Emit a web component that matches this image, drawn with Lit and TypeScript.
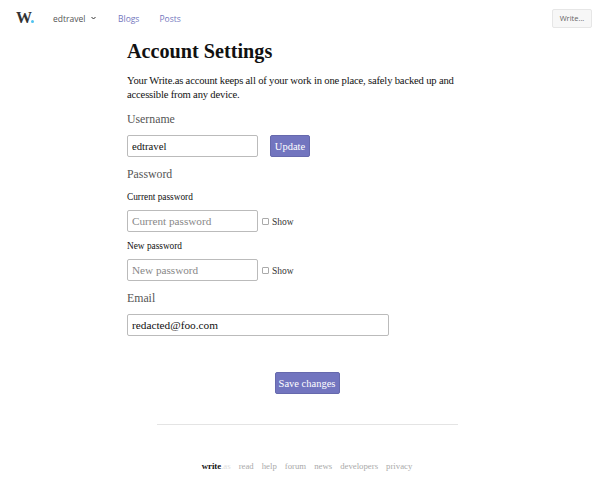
import { LitElement, html, css } from 'lit'
import { customElement } from 'lit/decorators.js'

const links = ['read', 'help', 'forum', 'news', 'developers', 'privacy']

@customElement('app-root')
export class AppRoot extends LitElement {
  static styles = css`
    :host {
      display: block;
      width: 614px;
      height: 500px;
      overflow: hidden;
      background: #fff;
      color: #111;
      font-family: 'Liberation Serif', serif;
    }
    * {
      box-sizing: border-box;
    }
    nav {
      display: flex;
      align-items: center;
      height: 36px;
      padding: 0 22px 0 16px;
      font-family: 'Open Sans', sans-serif;
      font-size: 8.5px;
    }
    .logo {
      display: flex;
      align-items: baseline;
      width: 37px;
      font-family: 'Liberation Serif', serif;
      font-weight: 700;
      font-size: 16px;
      line-height: 1;
      color: #333;
    }
    .logo i {
      width: 3px;
      height: 3px;
      margin-left: -1px;
      border-radius: 50%;
      background: #4fc3f0;
    }
    .user {
      display: flex;
      align-items: center;
      width: 65px;
      color: #555;
    }
    .user svg {
      margin-left: 6px;
    }
    nav a {
      color: #7477be;
      margin-right: 20px;
    }
    .write {
      margin-left: auto;
      width: 40px;
      height: 19px;
      padding: 0;
      border: 1px solid #e6e6e6;
      border-radius: 2px;
      background: #f7f7f7;
      color: #666;
      font: 7.5px 'Open Sans', sans-serif;
    }
    main {
      width: 360px;
      margin-left: 127px;
    }
    h1 {
      margin: 4px 0 0;
      font-size: 20.2px;
      line-height: 22px;
      font-weight: 700;
      color: #111;
    }
    p {
      margin: 12px 0 0;
      font-size: 10.6px;
      letter-spacing: -0.17px;
      line-height: 14px;
      width: 335px;
    }
    h2 {
      margin: 9px 0 0;
      font-size: 11.8px;
      line-height: 16px;
      font-weight: 400;
      color: #555;
    }
    .row {
      display: flex;
      align-items: center;
      margin-top: 8px;
    }
    input[type='text'] {
      width: 131px;
      height: 22px;
      padding: 0 4px;
      border: 1px solid #bbb;
      border-radius: 2px;
      outline: none;
      font: 11.2px 'Liberation Serif', serif;
      color: #111;
    }
    input.name {
      font-size: 10.7px;
    }
    input::placeholder {
      color: #888;
    }
    input.wide {
      width: 262px;
      font-size: 11.3px;
    }
    button.primary {
      border: 1px solid #6669ad;
      border-radius: 2px;
      background: #7275bf;
      color: #fff;
      padding: 0;
      height: 22px;
      white-space: nowrap;
      font: 10.5px 'Liberation Serif', serif;
    }
    .update {
      width: 40px;
      margin-left: 12px;
    }
    label.sub {
      display: block;
      margin-top: 8px;
      font-size: 9.3px;
      line-height: 12px;
    }
    h2 + label.sub {
      margin-top: 9px;
    }
    label.sub + .row {
      margin-top: 7px;
    }
    .show {
      display: flex;
      align-items: center;
      margin-left: 4px;
      padding-top: 1px;
      font-size: 9.5px;
      color: #333;
    }
    .show span {
      width: 7px;
      height: 7px;
      margin-right: 3px;
      border: 1px solid #aaa;
      border-radius: 1px;
    }
    .save-row {
      display: flex;
      justify-content: center;
      width: 360px;
      margin-top: 36px;
    }
    .save {
      width: 65px;
    }
    hr {
      width: 301px;
      height: 1px;
      margin: 30px 0 0 157px;
      border: 0;
      background: #e4e4e4;
    }
    footer {
      display: flex;
      justify-content: center;
      gap: 8px;
      width: 614px;
      margin-top: 35px;
      font-size: 8.75px;
      line-height: 12px;
      color: #aaa;
    }
    footer b {
      color: #111;
    }
    footer b span {
      color: #ddd;
      font-weight: 400;
    }
  `

  render() {
    return html`
      <nav>
        <div class="logo">W<i></i></div>
        <div class="user">
          edtravel
          <svg width="5" height="4" viewBox="0 0 5 4">
            <path d="M.5 1l2 2 2-2" fill="none" stroke="#333" stroke-width="1" />
          </svg>
        </div>
        <a>Blogs</a>
        <a>Posts</a>
        <button class="write">Write...</button>
      </nav>
      <main>
        <h1>Account Settings</h1>
        <p>
          Your Write.as account keeps all of your work in one place, safely backed up and
          accessible from any device.
        </p>
        <h2>Username</h2>
        <div class="row">
          <input class="name" type="text" value="edtravel" />
          <button class="primary update">Update</button>
        </div>
        <h2>Password</h2>
        <label class="sub">Current password</label>
        <div class="row">
          <input type="text" placeholder="Current password" />
          <div class="show"><span></span>Show</div>
        </div>
        <label class="sub">New password</label>
        <div class="row">
          <input type="text" placeholder="New password" />
          <div class="show"><span></span>Show</div>
        </div>
        <h2>Email</h2>
        <div class="row">
          <input class="wide" type="text" value="redacted@foo.com" />
        </div>
        <div class="save-row">
          <button class="primary save">Save changes</button>
        </div>
      </main>
      <hr />
      <footer>
        <b>write<span>.as</span></b>
        ${links.map((l) => html`<span>${l}</span>`)}
      </footer>
    `
  }
}
